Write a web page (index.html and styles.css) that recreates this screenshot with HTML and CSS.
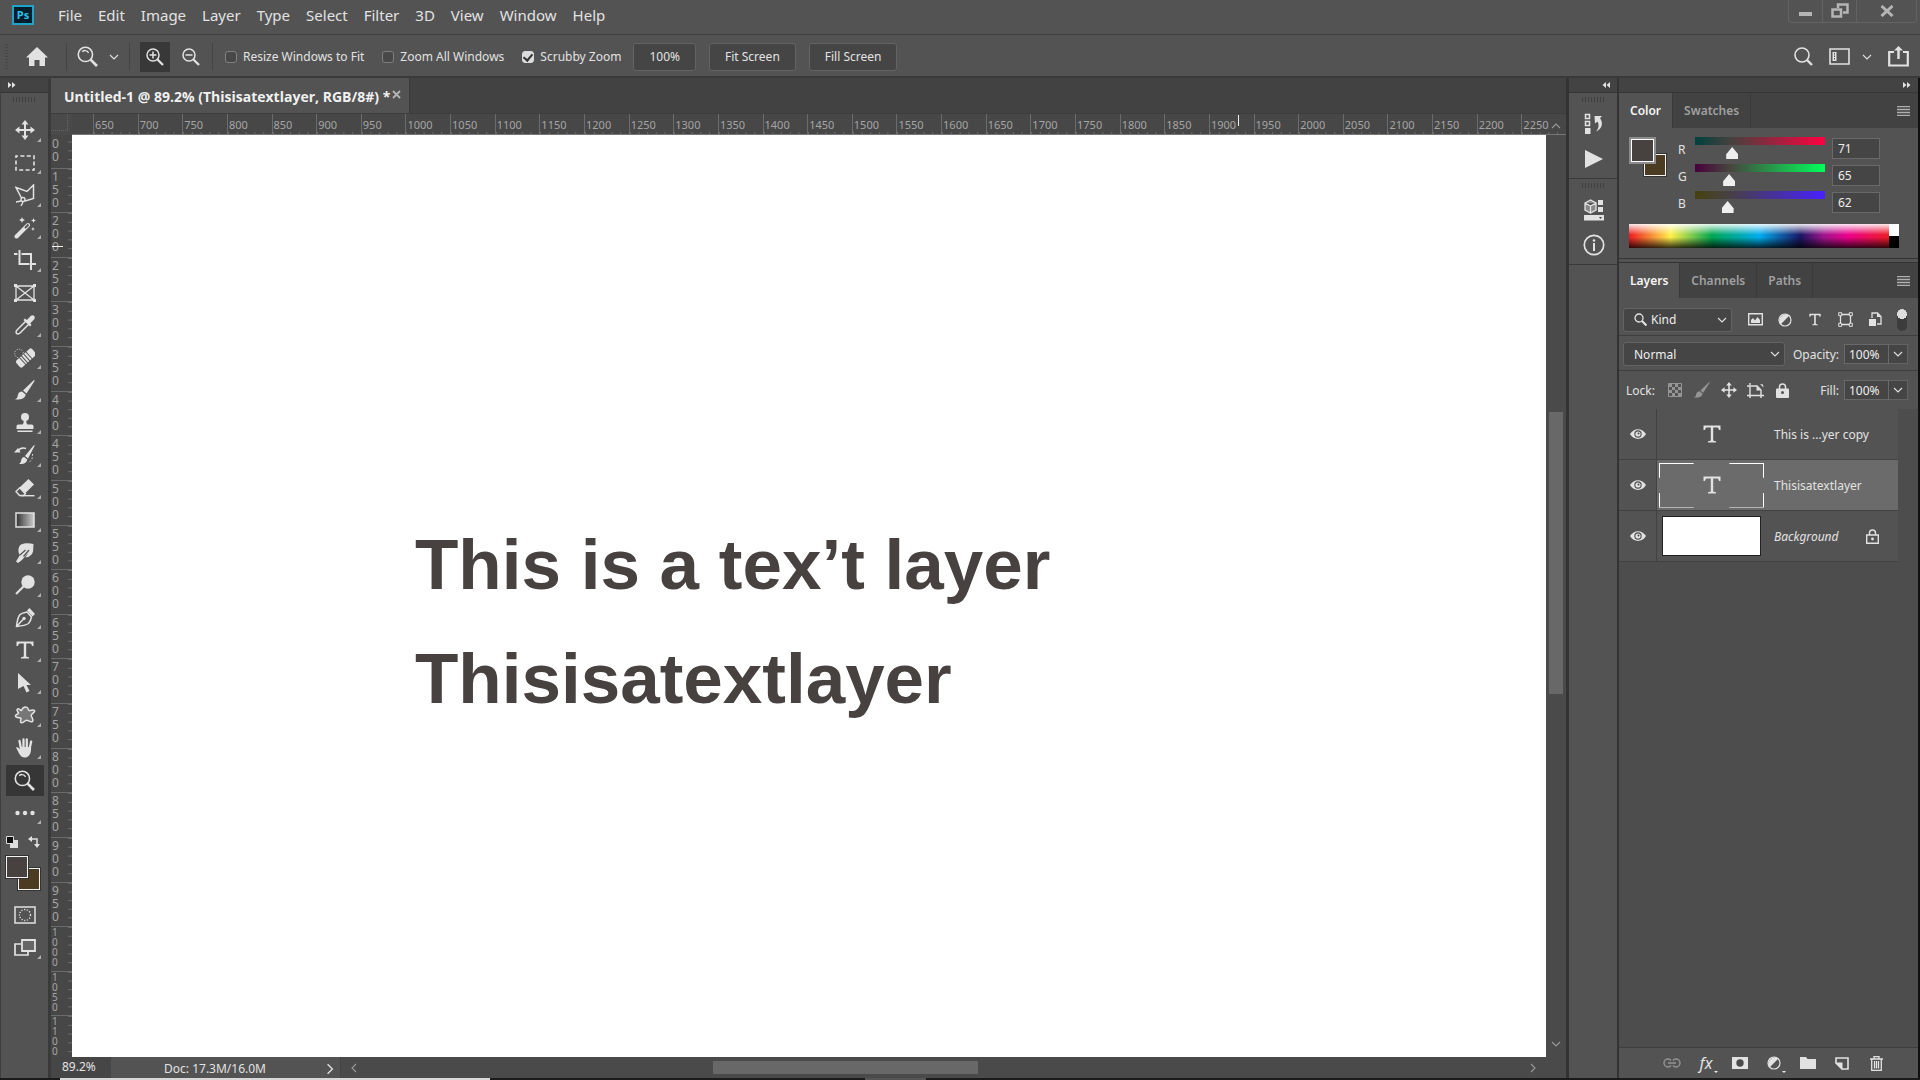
FILE: index.html
```html
<!DOCTYPE html>
<html lang="en">

<head>
    <meta charset="UTF-8">
    <meta name="viewport" content="width=device-width, initial-scale=1.0">
    <title>Untitled-1 @ 89.2%</title>
    <link rel="stylesheet" href="styles.css">
</head>

<body>

    <!-- shared icons -->
    <svg class="sprite" aria-hidden="true">
        <symbol id="chevron" viewBox="0 0 10 10"><path d="M1 3l4 4 4-4" fill="none" stroke="currentColor" stroke-width="1.1"/></symbol>
        <symbol id="arrows" viewBox="0 0 8 8"><path d="M0 1l3.500 3L0 7zM4 1l3.500 3L4 7z" fill="currentColor"/></symbol>
        <symbol id="eye" viewBox="0 0 16 12"><path d="M0 6C4-.5 12-.5 16 6 12 12.500 4 12.500 0 6z" fill="currentColor"/><circle cx="8" cy="6" r="3.700" fill="#4a4a4a"/><circle cx="8" cy="6" r="2.600" fill="currentColor"/><circle cx="8.500" cy="5.500" r="1" fill="#4a4a4a"/></symbol>
        <symbol id="type" viewBox="0 0 18 18"><path d="M0.500 0.500h17V5H16C15.500 3 15 2.500 13.500 2.500H10.200V15c0 .8.6 1 2.800 1.200V17.500h-8V16.200C7.200 16 7.800 15.800 7.800 15V2.500H4.500C3 2.500 2.500 3 2 5H.5z" fill="currentColor"/></symbol>
        <symbol id="move" viewBox="0 0 20 20"><path d="M10 0l3.500 4.500H11V9h4.500V6.500L20 10l-4.500 3.500V11H11v4.500h2.500L10 20l-3.500-4.500H9V11H4.500v2.500L0 10l4.500-3.500V9H9V4.500H6.500z" fill="currentColor"/></symbol>
        <symbol id="zoom" viewBox="0 0 20 20"><circle cx="8" cy="8" r="6.800" fill="none" stroke="currentColor" stroke-width="1.500"/><path d="M5 5.500C6.500 3.800 9.500 3.800 11 6.500" fill="none" stroke="currentColor" stroke-width="1.300"/><path d="M13 13l6 6" stroke="currentColor" stroke-width="2.600"/></symbol>
        <symbol id="adjust" viewBox="0 0 14 14"><circle cx="7" cy="7" r="6" fill="none" stroke="currentColor" stroke-width="1.200"/><path d="M11.200 2.800A6 6 0 0 0 2.800 11.200z" fill="currentColor"/></symbol>
        <symbol id="lines" viewBox="0 0 13 10"><path d="M0 .5h13M0 3.500h13M0 6.500h13M0 9.500h13" stroke="currentColor" stroke-width="1.500"/></symbol>
    </svg>

    <header class="menubar">
        <svg class="logo" viewBox="0 0 22 20" role="img" aria-label="Ps"><rect x="1" y="1" width="20" height="18" fill="#001d2b" stroke="#1fa3c9" stroke-width="2"/><text x="11" y="14" text-anchor="middle">Ps</text></svg>
        <nav class="menus">
            <button>File</button>
            <button>Edit</button>
            <button>Image</button>
            <button>Layer</button>
            <button>Type</button>
            <button>Select</button>
            <button>Filter</button>
            <button>3D</button>
            <button>View</button>
            <button>Window</button>
            <button>Help</button>
        </nav>
        <div class="window-btns">
            <button aria-label="Minimize"><svg width="14" height="14" viewBox="0 0 14 14"><path d="M0 8h13v4H0z" fill="currentColor"/></svg></button>
            <button aria-label="Restore"><svg width="18" height="16" viewBox="0 0 18 16"><path d="M7 5V1.500h9.500v8H12M1.500 6.500h8.500v7H1.500z" fill="none" stroke="currentColor" stroke-width="2.500"/></svg></button>
            <button class="close" aria-label="Close"><svg width="14" height="12" viewBox="0 0 14 12"><path d="M1.500 1l11 10M12.500 1l-11 10" stroke="currentColor" stroke-width="3"/></svg></button>
        </div>
    </header>

    <div class="options">
        <span class="grip-v"></span>
        <button class="home" aria-label="Home"><svg width="22" height="20" viewBox="0 0 22 20"><path d="M11 0l11 10.500h-3V19h-5.500v-6h-5v6H3v-8.500H0z" fill="currentColor"/></svg></button>
        <span class="sep"></span>
        <button class="current" aria-label="Zoom tool"><svg width="21" height="21"><use href="#zoom"/></svg><svg width="10" height="10"><use href="#chevron"/></svg></button>
        <span class="sep"></span>
        <button class="mode on" aria-label="Zoom in"><svg width="18" height="18" viewBox="0 0 18 18"><circle cx="7" cy="7" r="6" fill="none" stroke="currentColor" stroke-width="1.500"/><path d="M3.500 7h7M7 3.500v7" stroke="currentColor" stroke-width="1.500"/><path d="M11.500 11.500l5.500 5.500" stroke="currentColor" stroke-width="2.300"/></svg></button>
        <button class="mode" aria-label="Zoom out"><svg width="18" height="18" viewBox="0 0 18 18"><circle cx="7" cy="7" r="6" fill="none" stroke="currentColor" stroke-width="1.500"/><path d="M3.500 7h7" stroke="currentColor" stroke-width="1.500"/><path d="M11.500 11.500l5.500 5.500" stroke="currentColor" stroke-width="2.300"/></svg></button>
        <span class="sep"></span>
        <div class="checks">
            <label><input type="checkbox">Resize Windows to Fit</label>
            <label><input type="checkbox">Zoom All Windows</label>
            <label><input type="checkbox" checked>Scrubby Zoom</label>
        </div>
        <div class="zoom-btns">
            <button>100%</button>
            <button>Fit Screen</button>
            <button>Fill Screen</button>
        </div>
        <div class="options-right">
            <button aria-label="Search"><svg width="19" height="19" viewBox="0 0 19 19"><circle cx="8" cy="8" r="7" fill="none" stroke="currentColor" stroke-width="1.600"/><path d="M13 13l5 5" stroke="currentColor" stroke-width="2.400"/></svg></button>
            <button class="workspace" aria-label="Workspace"><svg width="21" height="17" viewBox="0 0 21 17"><path d="M1 1h19v15H1z" fill="none" stroke="currentColor" stroke-width="1.600"/><path d="M3.500 4h4v9h-4z" fill="currentColor"/><path d="M5.500 5v7" stroke="#535353" stroke-dasharray="1.500 1"/></svg><svg width="10" height="10"><use href="#chevron"/></svg></button>
            <button aria-label="Share"><svg width="21" height="21" viewBox="0 0 21 21"><path d="M6 6H1.200v13.500h18.600V6H15" fill="none" stroke="currentColor" stroke-width="2.200"/><path d="M10.500 13V3" stroke="currentColor" stroke-width="2.400"/><path d="M10.500 0L15 4.500H6z" fill="currentColor"/></svg></button>
        </div>
    </div>

    <div class="workarea">

        <aside class="toolbar">
            <div class="dock-head left"><svg width="8" height="8"><use href="#arrows"/></svg></div>
            <span class="grip"></span>
            <div class="tools">
                <button class="more" aria-label="Move"><svg width="20" height="20"><use href="#move"/></svg></button>
                <button class="more" aria-label="Marquee"><svg width="20" height="16" viewBox="0 0 20 16"><path d="M1 1h18v14H1z" fill="none" stroke="currentColor" stroke-width="1.600" stroke-dasharray="4 2.400" stroke-dashoffset="2"/></svg></button>
                <button class="more" aria-label="Lasso"><svg width="20" height="22" viewBox="0 0 20 22"><path d="M6.500 14L1 3.500l11 4L18.500 1v13.500L10 17" fill="none" stroke="currentColor" stroke-width="1.500"/><circle cx="8" cy="15.500" r="2" fill="none" stroke="currentColor" stroke-width="1.400"/><path d="M6 17l-5 1M8 18l-2 4" stroke="currentColor" stroke-width="1.400"/></svg></button>
                <button class="more" aria-label="Magic wand"><svg width="22" height="22" viewBox="0 0 22 22"><path d="M2.500 19.500L14 8" stroke="currentColor" stroke-width="4" stroke-linecap="round"/><path d="M11 11l3.500-3.500" stroke="#535353" stroke-width="1.800"/><path d="M8 0l.9 2.100L11 3l-2.100.9L8 6l-.9-2.100L5 3l2.100-.9zM19.500 1l.7 1.800 1.800.7-1.800.7-.7 1.800-.7-1.800-1.800-.7 1.800-.7zM19 10l.6 1.400 1.400.6-1.400.6L19 14l-.6-1.400-1.400-.6 1.400-.6z" fill="currentColor"/></svg></button>
                <button class="more" aria-label="Crop"><svg width="22" height="20" viewBox="0 0 22 20"><path d="M0 4h3.500M5.500 0v14h10M18 14h4M7.500 4h9.500v16" fill="none" stroke="currentColor" stroke-width="2"/></svg></button>
                <button aria-label="Frame"><svg width="22" height="18" viewBox="0 0 22 18"><path d="M2 2h18v14H2zM2 2l18 14M20 2L2 16" fill="none" stroke="currentColor" stroke-width="1.300"/><path d="M0 0h3v3H0zM19 0h3v3h-3zM0 15h3v3H0zM19 15h3v3h-3z" fill="currentColor"/></svg></button>
                <button class="more" aria-label="Eyedropper"><svg width="20" height="20" viewBox="0 0 20 20"><path d="M10.500 6.500L2 15c-1 1-1 2.500-.5 3.500 1 .5 2.500.5 3.500-.5l8.500-8.500" fill="none" stroke="currentColor" stroke-width="1.500"/><path d="M8.500 5l6.500 6.500 1.500-1.500-1.200-1.700 3.700-3.800c1-1 1-2.500.2-3.500-1-.9-2.500-.9-3.500 0L11.900 4.900 10 3.500z" fill="currentColor"/></svg></button>
                <button class="more" aria-label="Healing brush"><svg width="21" height="21" viewBox="0 0 21 21"><circle cx="5" cy="6.500" r="4.300" fill="none" stroke="currentColor" stroke-dasharray="1 1.500"/><g transform="rotate(-42 12 11)"><rect x="1.500" y="6.500" width="21" height="9" rx="2" fill="currentColor"/><path d="M7.500 6v10M10 6v10M13 6v10M16 6v10" stroke="#535353"/></g></svg></button>
                <button class="more" aria-label="Brush"><svg width="20" height="20" viewBox="0 0 20 20"><path d="M19 0l.7.700L11.500 13.500 8 10.500zM7 11.500l3.700 3C10 19 5 20 0 19.500c2.500-1 2.500-3 3-5 .5-1.800 2-3 4-3z" fill="currentColor"/></svg></button>
                <button class="more" aria-label="Clone stamp"><svg width="18" height="20" viewBox="0 0 18 20"><circle cx="9" cy="4" r="4" fill="currentColor"/><path d="M7.500 6h3c-.5 3 0 4.500 1 5.500h4c1.500 0 2 .8 2 2V16H.5v-2.500c0-1.200.5-2 2-2h4c1-1 1.500-2.500 1-5.500zM1.500 17.500h15V19h-15z" fill="currentColor"/></svg></button>
                <button class="more" aria-label="History brush"><svg width="22" height="20" viewBox="0 0 22 20"><path d="M20 0l.7.700L14 13.500l-3-2.500zM10.200 12l3 2.500C12.500 18.500 9 19.500 5 19c1.500-1 2-2.500 2.200-4 .3-1.500 1.300-3 3-3zM0 7.500L4 3l2.500 4.500z" fill="currentColor"/><path d="M4 6c2-3 5-3.500 8-2.500" fill="none" stroke="currentColor" stroke-width="1.400"/><path d="M18.500 9c.5 4-1 7-4.500 9" fill="none" stroke="currentColor" stroke-dasharray="1.500 2"/></svg></button>
                <button class="more" aria-label="Eraser"><svg width="20" height="18" viewBox="0 0 20 18"><path d="M13.500 0L19 5.500 9.500 15 4 9z" fill="currentColor"/><path d="M5 8.500l-4 4L4.500 16.500h4L11 14" fill="none" stroke="currentColor" stroke-width="1.400"/><path d="M6 16.700h13.500" stroke="currentColor" stroke-width="1.400"/></svg></button>
                <button class="more" aria-label="Gradient"><svg width="20" height="16" viewBox="0 0 20 16"><defs><linearGradient id="grad"><stop offset="0" stop-color="#333"/><stop offset="1" stop-color="#ccc"/></linearGradient></defs><rect x="1" y="1" width="18" height="14" fill="url(#grad)" stroke="currentColor" stroke-width="1.500"/></svg></button>
                <button class="more" aria-label="Smudge"><svg width="18" height="20" viewBox="0 0 18 20"><path d="M5 1.500C9-.5 14 0 17.500 1c-.5 4 .5 8-2 10.500-1.500 2-4 3-6 3l3-5L6 17l-4 3-2-1.500 4-6.500C1.500 10 2 3.500 5 1.500z" fill="currentColor"/><path d="M4 12l5.500-5M7.500 13.500L13 7" stroke="#535353" stroke-width="1.200"/></svg></button>
                <button class="more" aria-label="Dodge"><svg width="20" height="20" viewBox="0 0 20 20"><circle cx="13" cy="7" r="6.700" fill="currentColor"/><path d="M9 11L1 19" stroke="currentColor" stroke-width="2.200"/></svg></button>
                <button class="more" aria-label="Pen"><svg width="20" height="20" viewBox="0 0 20 20"><path d="M1.500 18.500C2 13.500 3 9 5 6.500c2-1.500 4.500-2 7-2.500l4.500 5c-.5 2.500-1.500 5-3 6.500-3 2-7 2.500-12 3zM2 18l6-6.500" fill="none" stroke="currentColor" stroke-width="1.500"/><circle cx="9" cy="10.500" r="1.700" fill="currentColor"/><path d="M12 2.500L14.500 0 20 6l-2.500 2.500z" fill="currentColor"/></svg></button>
                <button class="more" aria-label="Type"><svg width="18" height="18"><use href="#type"/></svg></button>
                <button class="more" aria-label="Path selection"><svg width="14" height="20" viewBox="0 0 14 20"><path d="M0 0l13 12H8.500l3 6-3 1.500-3-6.500L0 16z" fill="currentColor"/></svg></button>
                <button class="more" aria-label="Custom shape"><svg width="22" height="18" viewBox="0 0 22 18"><path d="M7.500 4.500C8.500 2 10.500.8 12.500 1.200c2 .3 1.300 2.500 2.500 3.300 1.500.5 4-1.200 5.500 0 1.300 1.800-3.200 3-3.300 5 .2 2 2.800 4 1.300 6-1.800 1.500-4-1.500-6-1.200-2 .2-3 3.200-5.500 2.200-1.300-.7.200-3 0-4.300-1-1-5 0-5.500-2C1.200 8 4 8.500 4.500 7.300 4.500 6 1.800 4.500 3.500 3c1.500-1 2.500 1.500 4 1.500z" fill="#777" stroke="currentColor" stroke-width="1.500"/></svg></button>
                <button class="more" aria-label="Hand"><svg width="19" height="20" viewBox="0 0 19 20"><path d="M6 11L4.500 3M8.500 10V1.500M11.800 10V1.500M14.500 11l1.700-7.500" stroke="currentColor" stroke-width="2.300" stroke-linecap="round"/><path d="M1 9.500c1.500-1 3 .5 4.500 2.500V9h10.500c.5 5-1 9.500-5 10.500-6 .8-7-5-10-10z" fill="currentColor"/></svg></button>
                <button class="selected" aria-label="Zoom"><svg width="21" height="21"><use href="#zoom"/></svg></button>
                <button class="more" aria-label="Edit toolbar"><svg width="20" height="6" viewBox="0 0 20 6"><circle cx="2.500" cy="3" r="2.200" fill="currentColor"/><circle cx="10" cy="3" r="2.200" fill="currentColor"/><circle cx="17.500" cy="3" r="2.200" fill="currentColor"/></svg></button>
            </div>
            <div class="color-reset">
                <button aria-label="Default colors"><svg width="12" height="12" viewBox="0 0 12 12"><path d="M4 4h8v8H4z" fill="#ddd"/><path d="M.5.500h7v7h-7z" fill="#111" stroke="#ddd"/></svg></button>
                <button aria-label="Switch colors"><svg width="12" height="12" viewBox="0 0 12 12"><path d="M3 3h6v6" fill="none" stroke="currentColor" stroke-width="1.500"/><path d="M0 3l4-3v6zM6 8h6l-3 4z" fill="currentColor"/></svg></button>
            </div>
            <div class="chips"><span class="bg"></span><span class="fg"></span></div>
            <div class="tools screen-tools">
                <button aria-label="Quick mask"><svg width="22" height="18" viewBox="0 0 22 18"><path d="M1 1h20v16H1z" fill="none" stroke="currentColor" stroke-width="1.500"/><circle cx="11" cy="9" r="5.500" fill="none" stroke="currentColor" stroke-width="1.300" stroke-dasharray="1.200 1.500"/></svg></button>
                <button class="more" aria-label="Screen mode"><svg width="22" height="18" viewBox="0 0 22 18"><path d="M7 5H1v11h13v-3" fill="none" stroke="currentColor" stroke-width="1.700"/><path d="M8 1h13v11H8z" fill="#666" stroke="currentColor" stroke-width="1.800"/></svg></button>
            </div>
        </aside>

        <main class="document">
            <div class="doc-tabs">
                <div class="doc-tab">Untitled-1 @ 89.2% (Thisisatextlayer, RGB/8#) *<button aria-label="Close tab"><svg width="9" height="9" viewBox="0 0 9 9"><path d="M1 1l7 7M8 1L1 8" stroke="currentColor" stroke-width="1.800"/></svg></button></div>
            </div>
            <div class="view">
                <div class="corner"></div>
                <div class="ruler-x" id="ruler-x"></div>
                <div class="ruler-y" id="ruler-y"></div>
                <div class="canvas">
                    <p class="text-layer first">This is a tex’t layer</p>
                    <p class="text-layer second">Thisisatextlayer</p>
                </div>
                <div class="scroll-y">
                    <svg class="up" width="10" height="10"><use href="#chevron"/></svg>
                    <div class="track"><span></span></div>
                    <svg width="10" height="10"><use href="#chevron"/></svg>
                </div>
            </div>
            <div class="status">
                <span class="zoom-level">89.2%</span>
                <span class="doc-size">Doc: 17.3M/16.0M<svg width="12" height="12"><use href="#chevron"/></svg></span>
                <div class="scroll-x">
                    <svg class="prev" width="10" height="10"><use href="#chevron"/></svg>
                    <div class="track"><span></span></div>
                    <svg class="next" width="10" height="10"><use href="#chevron"/></svg>
                </div>
            </div>
        </main>

        <aside class="icon-dock">
            <div class="dock-head right"><svg class="flip" width="8" height="8"><use href="#arrows"/></svg></div>
            <div class="dock-group">
                <span class="grip"></span>
                <button aria-label="History"><svg width="20" height="22" viewBox="0 0 20 22"><path d="M1.500 1.500h4v4h-4zM1.500 8.500h4v4h-4z" fill="none" stroke="currentColor" stroke-width="1.500"/><path d="M1 15h5.500v6H1zM10.500 3H18l-2 2.300c4 5 1.500 11.200-4 13.200 3-3.500 3.300-7 1.500-10L11 10.500z" fill="currentColor"/></svg></button>
                <button aria-label="Actions"><svg width="18" height="18" viewBox="0 0 18 18"><path d="M0 0l18 9-18 9z" fill="currentColor"/></svg></button>
            </div>
            <div class="dock-group">
                <span class="grip"></span>
                <button aria-label="Libraries"><svg width="20" height="22" viewBox="0 0 20 22"><path d="M1 4l5.500-3L12 4v7l-5.500 3L1 11zM1 4l5.500 3L12 4M6.500 7v7" fill="#888" stroke="currentColor" stroke-width="1.300"/><path d="M14 1h5v5h-5zM14 8h5v5h-5zM0 16h20v5.500H0z" fill="currentColor"/><path d="M15 18h3l-1.500 2z" fill="#444"/></svg></button>
                <button aria-label="Info"><svg width="22" height="22" viewBox="0 0 22 22"><circle cx="11" cy="11" r="9.700" fill="none" stroke="currentColor" stroke-width="1.700"/><circle cx="11" cy="6.500" r="1.300" fill="currentColor"/><path d="M11 9v8" stroke="currentColor" stroke-width="2"/></svg></button>
            </div>
        </aside>

        <aside class="panels">
            <div class="dock-head right"><svg width="8" height="8"><use href="#arrows"/></svg></div>

            <section class="color-panel">
                <div class="tabs">
                    <button class="active">Color</button>
                    <button>Swatches</button>
                    <svg class="panel-menu" width="13" height="10"><use href="#lines"/></svg>
                </div>
                <div class="color-body">
                    <div class="chips small"><span class="bg"></span><span class="fg"></span></div>
                    <div class="sliders">
                        <div class="slider">
                            <label for="red">R</label>
                            <div class="ramp red"><input type="range" id="red" min="0" max="255" value="71"></div>
                            <input type="text" value="71" aria-label="Red">
                        </div>
                        <div class="slider">
                            <label for="green">G</label>
                            <div class="ramp green"><input type="range" id="green" min="0" max="255" value="65"></div>
                            <input type="text" value="65" aria-label="Green">
                        </div>
                        <div class="slider">
                            <label for="blue">B</label>
                            <div class="ramp blue"><input type="range" id="blue" min="0" max="255" value="62"></div>
                            <input type="text" value="62" aria-label="Blue">
                        </div>
                    </div>
                </div>
                <div class="spectrum"><span class="hues"></span><span class="bw"></span></div>
            </section>

            <section class="layers-panel">
                <div class="tabs">
                    <button class="active">Layers</button>
                    <button>Channels</button>
                    <button>Paths</button>
                    <svg class="panel-menu" width="13" height="10"><use href="#lines"/></svg>
                </div>
                <div class="row filter-row">
                    <div class="select kind">
                        <svg width="13" height="13" viewBox="0 0 13 13"><circle cx="5" cy="5" r="4" fill="none" stroke="currentColor" stroke-width="1.300"/><path d="M8 8l4.500 4.500" stroke="currentColor" stroke-width="2.200"/></svg>
                        <select aria-label="Filter"><option>Kind</option></select>
                        <svg width="10" height="10"><use href="#chevron"/></svg>
                    </div>
                    <div class="filters">
                        <button aria-label="Pixel layers"><svg width="15" height="13" viewBox="0 0 15 13"><path d="M.7.700h13.600v11H.7z" fill="none" stroke="currentColor" stroke-width="1.400"/><path d="M3 10V7l2-2 2 2.500L9.500 4 12 7v3z" fill="currentColor"/></svg></button>
                        <button aria-label="Adjustment layers"><svg width="14" height="14"><use href="#adjust"/></svg></button>
                        <button aria-label="Type layers"><svg width="12" height="13"><use href="#type"/></svg></button>
                        <button aria-label="Shape layers"><svg width="15" height="15" viewBox="0 0 15 15"><path d="M2.500 2.500h10v10h-10z" fill="none" stroke="currentColor" stroke-width="1.300"/><path d="M.7.700h3v3h-3zM11.300.700h3v3h-3zM.7 11.300h3v3h-3zM11.300 11.300h3v3h-3z" fill="#535353" stroke="currentColor"/></svg></button>
                        <button aria-label="Smart objects"><svg width="14" height="15" viewBox="0 0 14 15"><path d="M4 6V1h5.500L13 4.500V12H9" fill="none" stroke="currentColor" stroke-width="1.300"/><path d="M9 1v4h4M1 7h7v7H1z" fill="currentColor"/></svg></button>
                    </div>
                    <label class="toggle"><input type="checkbox" aria-label="Layer filtering" checked></label>
                </div>
                <div class="row blend-row">
                    <div class="select blend">
                        <select aria-label="Blend mode"><option>Normal</option></select>
                        <svg width="10" height="10"><use href="#chevron"/></svg>
                    </div>
                    <div class="percent">
                        <label for="opacity">Opacity:</label>
                        <input type="text" id="opacity" value="100%">
                        <button aria-label="Opacity slider"><svg width="10" height="10"><use href="#chevron"/></svg></button>
                    </div>
                </div>
                <div class="row lock-row">
                    <span class="lock-label">Lock:</span>
                    <div class="locks">
                        <button class="dim" aria-label="Lock transparency"><svg width="14" height="14" viewBox="0 0 14 14"><path d="M.5.500h13v13H.5z" fill="none" stroke="currentColor"/><path d="M1 1h3v3H1zM7 1h3v3H7zM4 4h3v3H4zM10 4h3v3h-3zM1 7h3v3H1zM7 7h3v3H7zM4 10h3v3H4zM10 10h3v3h-3z" fill="currentColor"/></svg></button>
                        <button class="dim" aria-label="Lock pixels"><svg width="16" height="16" viewBox="0 0 20 20"><path d="M19 0l.7.700L11.500 13.500 8 10.500zM7 11.500l3.700 3C10 19 5 20 0 19.500c2.500-1 2.500-3 3-5 .5-1.800 2-3 4-3z" fill="currentColor"/></svg></button>
                        <button aria-label="Lock position"><svg width="16" height="16"><use href="#move"/></svg></button>
                        <button aria-label="Lock artboard"><svg width="17" height="15" viewBox="0 0 17 15"><path d="M0 3h3.500M3 0v2M0 12.500h3M3 15v-2.500h11M3 12.500V3h7l4 4v5.500M14 15v-2.500h3" fill="none" stroke="currentColor" stroke-width="1.400"/><path d="M9.500 3v4.500H14zM13 1l3 .5.5 3" fill="currentColor"/></svg></button>
                        <button aria-label="Lock all"><svg width="13" height="15" viewBox="0 0 13 15"><path d="M3.500 6V4a3 3 0 0 1 6 0v2" fill="none" stroke="currentColor" stroke-width="1.500"/><rect y="5.500" width="13" height="9.500" rx="1" fill="currentColor"/><circle cx="6.500" cy="9.500" r="1.500" fill="#535353"/></svg></button>
                    </div>
                    <div class="percent">
                        <label for="fill">Fill:</label>
                        <input type="text" id="fill" value="100%">
                        <button aria-label="Fill slider"><svg width="10" height="10"><use href="#chevron"/></svg></button>
                    </div>
                </div>
                <div class="layer-area">
                    <ul class="layers">
                        <li>
                            <button class="visible" aria-label="Toggle visibility"><svg width="16" height="12"><use href="#eye"/></svg></button>
                            <span class="thumb"><svg width="18" height="18"><use href="#type"/></svg></span>
                            <span class="name">This is ...yer copy</span>
                        </li>
                        <li class="selected">
                            <button class="visible" aria-label="Toggle visibility"><svg width="16" height="12"><use href="#eye"/></svg></button>
                            <span class="thumb"><svg width="18" height="18"><use href="#type"/></svg></span>
                            <span class="name">Thisisatextlayer</span>
                        </li>
                        <li>
                            <button class="visible" aria-label="Toggle visibility"><svg width="16" height="12"><use href="#eye"/></svg></button>
                            <span class="thumb image"></span>
                            <span class="name"><em>Background</em></span>
                            <svg class="locked" width="13" height="15" viewBox="0 0 13 15"><path d="M3.500 6V4a3 3 0 0 1 6 0v2M.7 6h11.600v8.300H.7z" fill="none" stroke="currentColor" stroke-width="1.400"/><circle cx="6.500" cy="10" r="1.400" fill="currentColor"/></svg>
                        </li>
                    </ul>
                </div>
                <div class="layer-actions">
                    <button class="dim" aria-label="Link layers"><svg width="18" height="10" viewBox="0 0 18 10"><path d="M8 2.500C7 1 6 1 5 1a4 4 0 0 0 0 8c1 0 2 0 3-1.500M10 2.500C11 1 12 1 13 1a4 4 0 0 1 0 8c-1 0-2 0-3-1.500M5 5h8" fill="none" stroke="currentColor" stroke-width="1.400"/></svg></button>
                    <button class="fx more" aria-label="Layer style">fx</button>
                    <button aria-label="Add mask"><svg width="16" height="12" viewBox="0 0 16 12"><path d="M0 0h16v12H0z" fill="currentColor"/><circle cx="8" cy="6" r="3.700" fill="#4a4a4a"/></svg></button>
                    <button class="more" aria-label="New adjustment layer"><svg width="14" height="14"><use href="#adjust"/></svg></button>
                    <button aria-label="New group"><svg width="16" height="12" viewBox="0 0 16 12"><path d="M0 0h6l1.500 2H16v10H0z" fill="currentColor"/></svg></button>
                    <button aria-label="New layer"><svg width="14" height="13" viewBox="0 0 14 13"><path d="M1 6V1h12v11H7z" fill="none" stroke="currentColor" stroke-width="1.600"/><path d="M0 5.500h7.500V13z" fill="currentColor"/></svg></button>
                    <button aria-label="Delete layer"><svg width="13" height="15" viewBox="0 0 13 15"><path d="M0 3h13M4 2.500v-2h5v2M1.700 3v11.300h9.600V3M4.500 5v7.500M6.500 5v7.500M8.500 5v7.500" fill="none" stroke="currentColor" stroke-width="1.300"/></svg></button>
                </div>
            </section>
        </aside>
    </div>

    <div class="taskbar"></div>

    <script>
        // fills a ruler with one cell per 50px of the image
        function buildRuler(id, labels) {
            const ruler = document.getElementById(id);
            const cells = document.createElement('div');
            cells.className = 'cells';
            labels.forEach(function (label) {
                const cell = document.createElement('span');
                cell.textContent = label;
                if (String(label).length > 3) cell.className = 'long';
                cells.appendChild(cell);
            });
            ruler.appendChild(cells);
        }

        function range(from, to) {
            const list = [];
            for (let n = from; n <= to; n += 50) list.push(n);
            return list;
        }

        buildRuler('ruler-x', range(650, 2250));
        // the first digit of the 100 mark is scrolled out of view
        buildRuler('ruler-y', ['00'].concat(range(150, 1100)));
    </script>

</body>

</html>
```
FILE: styles.css
```css
* {
    box-sizing: border-box;
}

body {
    margin: 0;
    height: 100vh;
    display: flex;
    flex-direction: column;
    background: #535353;
    color: #e2e2e2;
    font-family: "Noto Sans", "Open Sans", sans-serif;
    font-size: 12px;
    overflow: hidden;
}

button {
    display: flex;
    align-items: center;
    justify-content: center;
    padding: 0;
    border: none;
    background: none;
    color: inherit;
    font: inherit;
}

svg {
    display: block;
    flex: none;
}

.sprite {
    position: absolute;
    width: 0;
    height: 0;
}

/* menu bar */

.menubar {
    display: flex;
    align-items: center;
    height: 35px;
    border-bottom: 1px solid #414141;
    padding: 0 3px 4px 12px;
}

.logo {
    width: 22px;
    height: 20px;
}

.logo text {
    fill: #2cc3ef;
    font-size: 11px;
    font-weight: bold;
}

.menus {
    display: flex;
    gap: 16px;
    margin-left: 24px;
    font-size: 15px;
}

.window-btns {
    display: flex;
    align-self: flex-start;
    margin-left: auto;
    height: 23px;
    border: 1px solid #636363;
    border-top: none;
    border-radius: 0 0 4px 4px;
    color: #b5b5b5;
}

.window-btns button {
    width: 34px;
    border-right: 1px solid #636363;
}

.window-btns .close {
    width: 59px;
    border-right: none;
}

/* options bar */

.options {
    display: flex;
    align-items: center;
    height: 43px;
    border-bottom: 2px solid #3a3a3a;
    padding: 2px 11px 0 5px;
}

.grip-v {
    width: 3px;
    height: 26px;
    background: repeating-linear-gradient(#464646 0 1px, transparent 1px 3px);
}

.sep {
    width: 1px;
    height: 28px;
    background: #444;
}

.home {
    width: 58px;
}

.current {
    width: 62px;
    gap: 11px;
}

.mode {
    width: 30px;
    height: 30px;
    margin-right: 6px;
}

.mode.on {
    background: #383838;
    margin-left: 10px;
}

.checks {
    display: flex;
    gap: 18px;
    margin-left: 12px;
}

.checks label {
    display: flex;
    align-items: center;
    gap: 6px;
}

.checks input {
    appearance: none;
    width: 12px;
    height: 12px;
    margin: 0;
    border: 1px solid #808080;
    border-radius: 3px;
    background: #484848;
}

.checks input:checked {
    display: grid;
    place-items: center;
    background: #dcdcdc;
    border-color: #dcdcdc;
}

.checks input:checked::after {
    content: "";
    width: 4px;
    height: 7px;
    border: solid #333;
    border-width: 0 2px 2px 0;
    transform: rotate(40deg);
}

.zoom-btns {
    display: flex;
    gap: 13px;
    margin-left: 12px;
}

.zoom-btns button {
    height: 28px;
    padding: 0 15px;
    border: 1px solid #636363;
    border-radius: 3px;
    background: #454545;
}

.options-right {
    display: flex;
    align-items: center;
    gap: 16px;
    margin-left: auto;
}

.workspace {
    gap: 12px;
}

/* work area */

.workarea {
    flex: 1;
    display: flex;
    min-height: 0;
}

.dock-head {
    display: flex;
    align-items: center;
    flex: none;
    height: 15px;
    padding: 0 7px;
    background: #434343;
    border-bottom: 1px solid #363636;
}

.dock-head.right {
    justify-content: flex-end;
}

.flip {
    transform: scaleX(-1);
}

.grip {
    flex: none;
    width: 24px;
    height: 5px;
    margin: 4px auto 0;
    background: repeating-linear-gradient(90deg, #404040 0 1px, transparent 1px 3px);
}

/* toolbar */

.toolbar {
    display: flex;
    flex-direction: column;
    width: 51px;
    border-left: 1px solid #404040;
    border-right: 3px solid #3a3a3a;
}

.tools {
    display: grid;
    grid-auto-rows: 1fr;
    justify-items: center;
    height: 715px;
    margin-top: 12px;
}

.tools button {
    position: relative;
    width: 38px;
}

.tools .selected {
    background: #363636;
    margin: 1px 0;
}

.more {
    position: relative;
}

.more::after {
    content: "";
    position: absolute;
    right: 3px;
    bottom: 5px;
    border-left: 4px solid transparent;
    border-bottom: 4px solid #b0b0b0;
}

.color-reset {
    display: flex;
    gap: 10px;
    margin: 7px 0 0 5px;
}

.chips {
    position: relative;
    width: 34px;
    height: 34px;
    margin: 8px 0 0 5px;
}

.chips span {
    position: absolute;
    width: 22px;
    height: 22px;
    border: 1px solid #f2f2f2;
    outline: 1px solid #333;
}

.chips .fg {
    left: 0;
    top: 0;
    background: #474140;
}

.chips .bg {
    right: 0;
    bottom: 0;
    background: #4b3b22;
}

.screen-tools {
    height: 66px;
    margin-top: 8px;
}

/* document */

.document {
    flex: 1;
    display: flex;
    flex-direction: column;
    min-width: 0;
    background: #4a4a4a;
}

.doc-tabs {
    display: flex;
    height: 36px;
    background: #424242;
    border-bottom: 1px solid #3d3d3d;
}

.doc-tab {
    display: flex;
    align-items: center;
    gap: 2px;
    padding: 2px 8px 0 13px;
    border-right: 1px solid #3a3a3a;
    background: #535353;
    color: #f0f0f0;
    font-family: "Open Sans", "Noto Sans", sans-serif;
    font-size: 14px;
    font-weight: bold;
    white-space: nowrap;
}

.doc-tab button {
    color: #b5b5b5;
    margin-bottom: 4px;
}

.view {
    flex: 1;
    display: grid;
    grid-template: 21px 1fr / 21px 1fr 20px;
    min-height: 0;
}

.corner {
    border-right: 1px dotted #666;
    border-bottom: 1px dotted #666;
    margin: 0 4px 4px 0;
}

.ruler-x,
.ruler-y {
    position: relative;
    overflow: hidden;
    background: #474747;
    color: #a5a5a5;
}

.ruler-x {
    grid-column: 2 / 4;
    border-bottom: 1px solid #777;
}

.ruler-x .cells {
    display: grid;
    grid-auto-flow: column;
    grid-auto-columns: 1fr;
    height: 100%;
    margin-left: 21px;
}

.ruler-x span {
    border-left: 1px solid #6b6b6b;
    padding-left: 1px;
    font-size: 11px;
    line-height: 22px;
    background: linear-gradient(90deg, #6b6b6b 1px, transparent 1px) left bottom / 20% 4px repeat-x;
}

/* starts above the visible part, at the 100px mark */
.ruler-y .cells {
    display: grid;
    grid-auto-rows: 1fr;
    height: calc(100% + 15px);
    margin-top: -12px;
}

.ruler-y span {
    border-top: 1px solid #6b6b6b;
    padding: 1px 12px 0 1px;
    font-size: 12px;
    line-height: 13px;
    word-break: break-all;
    background: linear-gradient(#6b6b6b 1px, transparent 1px) right top / 4px 20% repeat-y;
}

.ruler-y span:first-child {
    padding-top: 13px;
}

.ruler-y .long {
    padding-top: 0;
    font-size: 10px;
    line-height: 10px;
}

/* cursor position marks */
.ruler-x::after,
.ruler-y::after {
    content: "";
    position: absolute;
    background: #f0f0f0;
}

.ruler-x::after {
    left: 1166px;
    top: 1px;
    width: 1px;
    height: 11px;
}

.ruler-y::after {
    left: 1px;
    top: 111px;
    width: 11px;
    height: 1px;
}

.canvas {
    position: relative;
    overflow: hidden;
    background: #fff;
}

.text-layer {
    position: absolute;
    left: 343px;
    margin: 0;
    color: #474140;
    font: bold 71px/80px "Liberation Sans", Arial, sans-serif;
    white-space: nowrap;
}

.text-layer.first {
    top: 390px;
}

.text-layer.second {
    top: 504px;
}

.scroll-y,
.scroll-x {
    display: flex;
    align-items: center;
    color: #999;
}

.scroll-y {
    flex-direction: column;
    padding-bottom: 8px;
}

/* the up arrow lies over the end of the ruler */
.scroll-y .up {
    position: relative;
    margin-top: -14px;
    transform: rotate(180deg);
}

.track {
    position: relative;
    flex: 1;
}

.track span {
    position: absolute;
    background: #686868;
}

.scroll-y .track {
    width: 14px;
}

.scroll-y .track span {
    top: 31%;
    height: 31%;
    width: 100%;
}

.status {
    display: flex;
    height: 21px;
}

.zoom-level {
    width: 60px;
    padding-left: 11px;
    background: #464646;
    line-height: 20px;
}

.doc-size {
    display: flex;
    align-items: center;
    justify-content: flex-end;
    gap: 58px;
    width: 230px;
    padding: 2px 4px 0 0;
    background: #535353;
    border-right: 1px solid #444;
}

.doc-size svg,
.next {
    transform: rotate(-90deg);
}

.prev {
    transform: rotate(90deg);
}

.scroll-x {
    flex: 1;
    padding: 0 28px 0 8px;
}

.scroll-x .track {
    height: 13px;
    margin: 0 8px;
}

.scroll-x .track span {
    left: 30%;
    width: 23%;
    height: 100%;
}

/* collapsed panels */

.icon-dock {
    width: 51px;
    border-left: 3px solid #333;
}

.dock-group {
    display: flex;
    flex-direction: column;
    align-items: center;
    height: 86px;
    padding-left: 2px;
    border-bottom: 1px solid #3a3a3a;
}

.dock-group button {
    width: 34px;
    height: 35px;
}

.dock-group .grip {
    margin-bottom: 4px;
}

/* panels */

.panels {
    display: flex;
    flex-direction: column;
    width: 303px;
    border-left: 2px solid #333;
    border-right: 2px solid #111;
}

.tabs {
    display: flex;
    align-items: center;
    height: 35px;
    padding-right: 8px;
    background: #424242;
}

.tabs button {
    height: 35px;
    padding: 0 11px;
    border-right: 1px solid #3a3a3a;
    color: #a0a0a0;
    font-weight: 600;
}

.tabs .active {
    background: #535353;
    color: #f5f5f5;
}

.panel-menu {
    margin-left: auto;
    color: #b0b0b0;
}

.color-panel {
    height: 166px;
    border-bottom: 1px solid #333;
}

.color-body {
    display: flex;
    justify-content: space-between;
    height: 96px;
    padding: 9px 38px 0 10px;
}

.chips.small {
    margin: 2px 0 0;
    width: 37px;
    height: 37px;
}

.small .fg {
    border: 1px solid #fff;
    outline: 2px solid #8d8d8d;
    left: 2px;
    width: 23px;
    height: 23px;
}

.slider {
    display: flex;
    height: 27px;
}

.slider label {
    width: 17px;
    padding-top: 4px;
}

.ramp {
    width: 130px;
    height: 8px;
}

.ramp.red {
    background: linear-gradient(90deg, #00413e, #47413e 28%, #ff0040);
}

.ramp.green {
    background: linear-gradient(90deg, #47003e, #47413e 25%, #00ff5a);
}

.ramp.blue {
    background: linear-gradient(90deg, #474110, #47413e 24%, #4720ff);
}

.ramp input {
    appearance: none;
    display: block;
    width: 142px;
    height: 14px;
    margin: 9px 0 0 -5px;
    background: none;
}

.ramp input::-webkit-slider-thumb {
    appearance: none;
    width: 12px;
    height: 12px;
    background: #efefef;
    clip-path: polygon(50% 0, 100% 60%, 100% 100%, 0 100%, 0 60%);
}

.slider input[type="text"] {
    width: 48px;
    height: 21px;
    margin: 1px 0 0 7px;
    padding: 0 5px;
}

input[type="text"] {
    border: 1px solid #696969;
    background: #454545;
    color: #eee;
    font: inherit;
}

.spectrum {
    display: flex;
    height: 24px;
    margin: 0 19px 0 10px;
}

.hues {
    flex: 1;
    background: linear-gradient(rgba(255, 255, 255, 0.9), transparent 45%, transparent 55%, rgba(0, 0, 0, 0.8)),
        linear-gradient(90deg, #ed1c24, #fff04a 16%, #00a651 32%, #00aeef 50%, #1b1464 66%, #a0148c 75%, #ec008c 84%, #ed1c24);
}

.bw {
    width: 10px;
    background: linear-gradient(#fff 50%, #000 50%);
}

.layers-panel {
    flex: 1;
    display: flex;
    flex-direction: column;
    margin-top: 3px;
    border-top: 1px solid #333;
}

.row {
    display: flex;
    align-items: center;
    flex: none;
    padding-left: 4px;
}

.filter-row {
    height: 38px;
    border-bottom: 1px solid #3e3e3e;
    padding-top: 6px;
}

.blend-row {
    height: 35px;
    border-bottom: 1px solid #3e3e3e;
    padding-top: 2px;
}

.lock-row {
    height: 38px;
}

.select {
    display: flex;
    align-items: center;
    gap: 4px;
    height: 24px;
    padding: 0 4px 0 10px;
    border: 1px solid #636363;
    border-radius: 3px;
    background: #454545;
}

.select select {
    appearance: none;
    flex: 1;
    min-width: 0;
    padding: 0;
    border: none;
    background: none;
    color: #eee;
    font: inherit;
}

.kind {
    width: 109px;
}

.blend {
    width: 162px;
}

.filters {
    display: flex;
    margin-left: 8px;
}

.filters button {
    width: 30px;
}

.toggle {
    margin-left: 7px;
}

.toggle input {
    appearance: none;
    display: block;
    width: 10px;
    height: 22px;
    margin: 0;
    border-radius: 5px;
    background: radial-gradient(circle at 5px 5px, #ddd 5px, #3c3c3c 5px);
}

.percent {
    display: flex;
    align-items: center;
    margin: 0 10px 0 auto;
}

.percent label {
    margin-right: 5px;
}

.percent input {
    width: 45px;
    height: 20px;
    padding: 0 4px;
}

.percent button {
    width: 19px;
    height: 20px;
    border: 1px solid #636363;
    border-left: none;
    background: #454545;
}

.lock-label {
    width: 38px;
    padding-left: 3px;
}

.locks {
    display: flex;
}

.locks button {
    width: 27px;
}

.dim {
    color: #959595;
}

.layer-area {
    flex: 1;
    padding-right: 20px;
    background: #4d4d4d;
}

.layers {
    margin: 0;
    padding: 0;
    list-style: none;
}

.layers li {
    display: flex;
    align-items: center;
    height: 51px;
    border-bottom: 1px solid #424242;
    background: #535353;
}

.visible {
    width: 38px;
    height: 100%;
    border-right: 1px solid #424242;
}

.layers .selected {
    background: linear-gradient(90deg, #535353 38px, #6b6b6b 38px);
}

.thumb {
    position: relative;
    display: grid;
    place-items: center;
    width: 105px;
    height: 45px;
    margin: 0 10px 0 2px;
}

/* corner brackets round the active thumbnail */
.selected .thumb::before,
.selected .thumb::after {
    content: "";
    position: absolute;
    inset: 0;
    border: 1px solid #fff;
}

.selected .thumb::before {
    clip-path: polygon(0 0, 33% 0, 33% 100%, 0 100%, 0 68%, 10% 68%, 10% 34%, 0 34%);
}

.selected .thumb::after {
    clip-path: polygon(100% 0, 67% 0, 67% 100%, 100% 100%, 100% 68%, 90% 68%, 90% 34%, 100% 34%);
}

.thumb.image {
    width: 99px;
    height: 40px;
    margin: 0 13px 0 5px;
    border: 1px solid #222;
    background: #fff;
}

.name {
    flex: 1;
    white-space: nowrap;
}

.locked {
    margin-right: 19px;
}

.layer-actions {
    display: flex;
    justify-content: flex-end;
    align-items: center;
    height: 31px;
    padding-right: 25px;
    border-top: 1px solid #3e3e3e;
}

.layer-actions button {
    width: 34px;
    height: 20px;
}

.layer-actions .more::after {
    right: 5px;
    bottom: 0;
    border-left: 2px solid transparent;
    border-right: 2px solid transparent;
    border-bottom: none;
    border-top: 2px solid #eee;
}

.fx {
    font-size: 16px;
    font-style: italic;
}

.taskbar {
    height: 2px;
    background: linear-gradient(90deg, #1b1b1b 60px, #d8d8d8 60px 490px, #1b1b1b 490px 865px, #555 865px 926px, #1b1b1b 926px);
}
```
